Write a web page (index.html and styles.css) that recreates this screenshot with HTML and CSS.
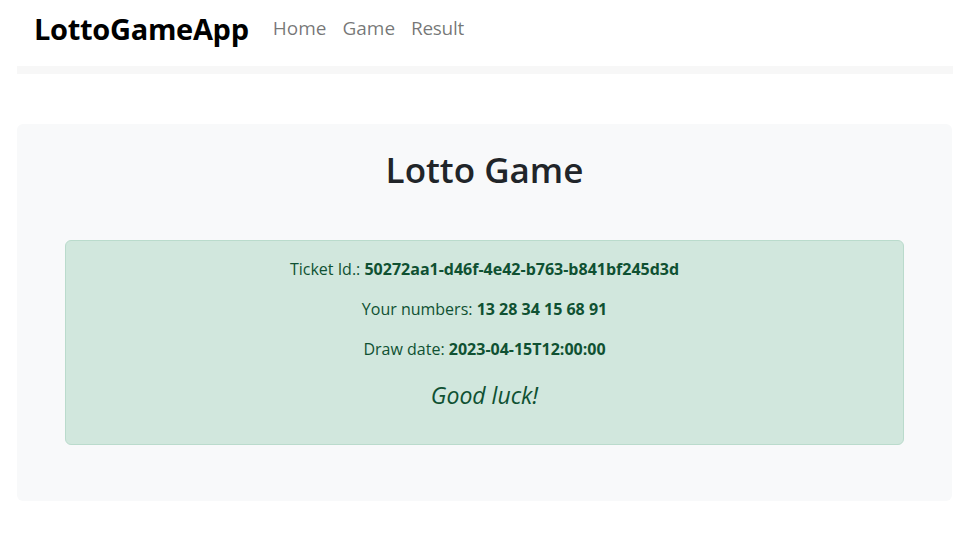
FILE: index.html
```html
<!DOCTYPE html>
<html lang="en">
<head>
<meta charset="utf-8">
<title>LottoGameApp</title>
<link rel="stylesheet" href="styles.css">
</head>
<body>
<header class="navbar">
  <div class="navbar-inner">
    <a class="brand" href="#">LottoGameApp</a>
    <nav class="nav">
      <a class="nav-link" href="#">Home</a>
      <a class="nav-link" href="#">Game</a>
      <a class="nav-link" href="#">Result</a>
    </nav>
  </div>
  <div class="navbar-strip"></div>
</header>
<main class="page">
  <section class="card">
    <h1 class="title">Lotto Game</h1>
    <div class="alert">
      <p>Ticket Id.: <b>50272aa1-d46f-4e42-b763-b841bf245d3d</b></p>
      <p>Your numbers: <b>13 28 34 15 68 91</b></p>
      <p>Draw date: <b>2023-04-15T12:00:00</b></p>
      <p class="luck"><i>Good luck!</i></p>
    </div>
  </section>
</main>
</body>
</html>
```
FILE: styles.css
```css
* { box-sizing: border-box; }
body {
  margin: 0;
  font-family: "Open Sans", "Noto Sans", sans-serif;
  font-size: 16px;
  line-height: 1.5;
  color: #212529;
  background: #fff;
}
a { text-decoration: none; }
.navbar { padding: 0 19px 0 17px; }
.navbar-inner {
  height: 57px;
  margin-bottom: 9px;
  display: flex;
  align-items: center;
  padding-left: 17px;
}
.brand {
  font-size: 29px;
  font-weight: 700;
  color: #000;
  margin-right: 16px;
  letter-spacing: -0.3px;
}
.nav { display: flex; }
.nav-link {
  font-size: 19px;
  color: rgba(0,0,0,.55);
  padding: 0 8px;
}
.nav-link:last-child { letter-spacing: -0.3px; }
.navbar-strip {
  height: 8px;
  background: #f7f7f7;
}
.page { padding: 50px 20px 0 17px; }
.card {
  background: #f8f9fa;
  border-radius: 6px;
  padding: 22px 48px 56px;
}
.title {
  margin: 0 0 46px;
  text-align: center;
  font-size: 35px;
  font-weight: 600;
  line-height: 48px;
}
.alert {
  background: #d1e7dd;
  border: 1px solid #badbcc;
  color: #0f5132;
  border-radius: 6px;
  padding: 16px 16px 17px;
  text-align: center;
  font-size: 16px;
}
.alert p { margin: 0 0 16px; line-height: 24px; }
.alert b { font-weight: 700; }
.alert .luck { font-size: 23px; line-height: 36px; margin-bottom: 14px; }
```
